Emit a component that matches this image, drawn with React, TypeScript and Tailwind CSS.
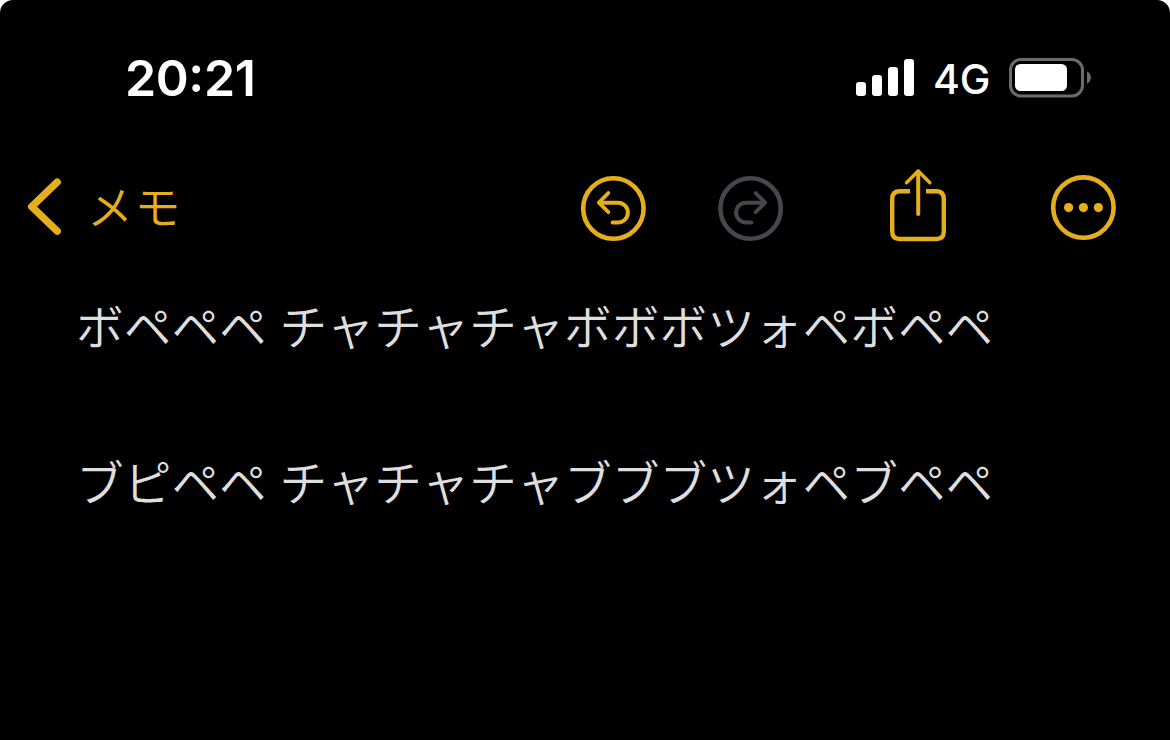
import React from 'react';

const SignalIcon = () => (
  <svg width="58" height="37" viewBox="0 0 58 37" fill="currentColor">
    <rect x="0" y="23" width="10" height="14" rx="3" />
    <rect x="16" y="16" width="10" height="21" rx="3" />
    <rect x="32" y="8" width="10" height="29" rx="3" />
    <rect x="48" y="0" width="10" height="37" rx="3" />
  </svg>
);

const BatteryIcon = () => (
  <svg width="83" height="40" viewBox="0 0 83 40">
    <rect x="1.5" y="1.5" width="72" height="36.5" rx="10.5" fill="none" stroke="#6b6b6b" strokeWidth="3" />
    <rect x="6" y="6" width="52" height="27" rx="5.5" fill="#fff" />
    <path d="M78 13.5C83.2 15.6 83.2 23.6 78 25.7Z" fill="#6b6b6b" />
  </svg>
);

const ChevronIcon = () => (
  <svg width="36" height="58" viewBox="0 0 36 58" fill="none" stroke="currentColor" strokeWidth="7.4" strokeLinecap="round" strokeLinejoin="round">
    <path d="M31.2 4.2L5.7 28.7L31.2 53.2" />
  </svg>
);

const UndoIcon = () => (
  <svg width="66" height="66" viewBox="0 0 66 66" fill="none" stroke="currentColor" strokeLinecap="round" strokeLinejoin="round">
    <circle cx="33.4" cy="33.5" r="30.2" strokeWidth="4.6" />
    <path d="M28.4 18L18.9 27.7L28.4 37.2" strokeWidth="3.8" />
    <path d="M19.4 27.7H38A9.9 9.9 0 0 1 38 47.5H32.6" strokeWidth="4" />
  </svg>
);

const ShareIcon = () => (
  <svg width="58" height="74" viewBox="0 0 58 74" fill="none" stroke="currentColor" strokeLinecap="round" strokeLinejoin="round">
    <path d="M21 23.3H10.8C5.8 23.3 3.2 26 3.2 31V63.5C3.2 68.5 5.8 71 10.8 71H47.2C52.2 71 54.8 68.5 54.8 63.5V31C54.8 26 52.2 23.3 47.2 23.3H37" strokeWidth="4.4" strokeLinecap="butt" />
    <path d="M29.2 3.5V46" strokeWidth="4" />
    <path d="M17.5 14.7L29.2 3L40.9 14.7" strokeWidth="3.4" />
  </svg>
);

const MoreIcon = () => (
  <svg width="66" height="66" viewBox="0 0 66 66" fill="currentColor">
    <circle cx="33.4" cy="32.6" r="30.2" fill="none" stroke="currentColor" strokeWidth="4.6" />
    <circle cx="18.6" cy="32.6" r="4.6" />
    <circle cx="33.4" cy="32.6" r="4.6" />
    <circle cx="48.4" cy="32.6" r="4.6" />
  </svg>
);

const App = () => {
  return (
    <div className="h-[740px] w-[1170px] overflow-hidden bg-white">
      <div className="flex h-full w-full flex-col rounded-t-[13px] bg-black">
        {/* Status bar */}
        <header className="flex h-[155px] items-center justify-between pl-[125px] pr-[78px] font-['Inter',sans-serif] text-white">
          <span className="text-[50px] font-semibold leading-none tracking-[-0.4px]">
            20<span className="inline-block -translate-y-[4px]">:</span>21
          </span>
          <div className="flex items-center">
            <SignalIcon />
            <span className="ml-[19px] mt-[3px] w-[76px] text-[41px] font-[450] leading-none tracking-[-0.2px]">4G</span>
            <BatteryIcon />
          </div>
        </header>

        {/* Toolbar */}
        <nav className="flex h-[106px] items-center justify-between pl-[26px] pr-[54px] text-[#e4af1a]">
          <button className="mb-[2px] flex items-center">
            <ChevronIcon />
            <span className="mb-[6px] ml-[25px] font-['Noto_Sans_CJK_JP',sans-serif] text-[46px] font-[350] leading-none tracking-[1.5px]">メモ</span>
          </button>
          <div className="flex items-center">
            <button><UndoIcon /></button>
            {/* mirrored, so it gets a pixel more on the left */}
            <button className="ml-[72px] mr-[-1px] -scale-x-100 text-[#47464a]" disabled><UndoIcon /></button>
            <button className="mb-[7px] ml-[106px]"><ShareIcon /></button>
            <button className="ml-[103px]"><MoreIcon /></button>
          </div>
        </nav>

        {/* Note body */}
        <main className="whitespace-pre pl-[76px] pt-[25px] font-['Noto_Sans_CJK_JP',sans-serif] text-[47.7px] font-[350] leading-[78px] text-[#dedede] [word-spacing:2px]">
          <p>ボペペペ チャチャチャボボボツォペボペペ</p>
          <p className="mt-[78px]">ブピペペ チャチャチャブブブツォペブペペ</p>
        </main>
      </div>
    </div>
  );
};

export default App;
